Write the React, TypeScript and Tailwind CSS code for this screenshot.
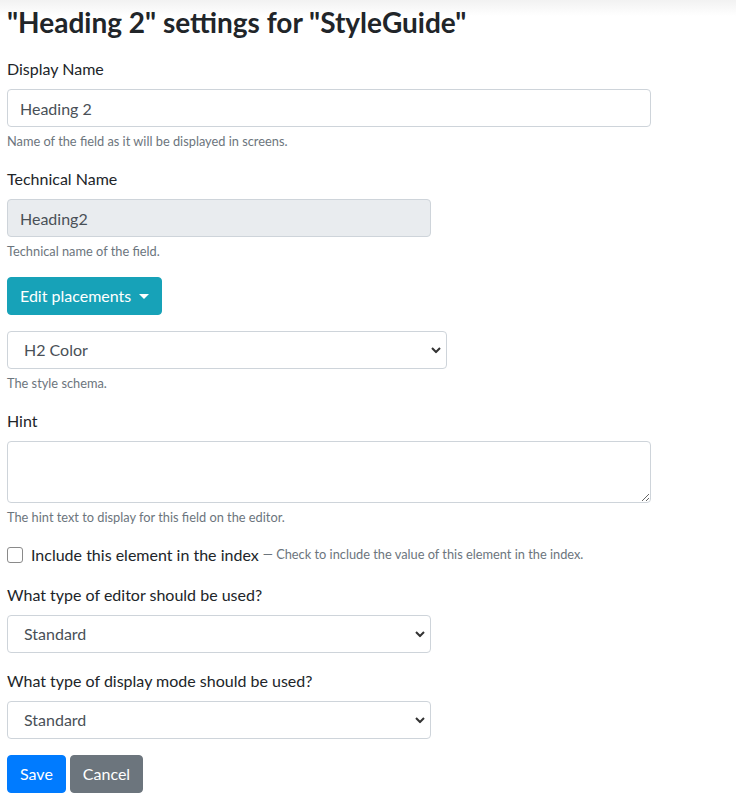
import { ReactNode } from "react";

const font = { fontFamily: 'Lato, "Open Sans", sans-serif' };

function Chevron() {
  return (
    <svg
      className="pointer-events-none absolute right-[6px] top-1/2 -translate-y-1/2"
      width="10"
      height="7"
      viewBox="0 0 10 7"
      fill="none"
    >
      <path d="M1 1.5l4 4 4-4" stroke="#333" strokeWidth="2" />
    </svg>
  );
}

function Help({ children }: { children: ReactNode }) {
  return <p className="mt-1 text-[12.8px] leading-5 text-[#6c757d]">{children}</p>;
}

function Field({ label, help, children }: { label: string; help?: string; children: ReactNode }) {
  return (
    <div className="mb-4">
      <label className="mb-2 block leading-6">{label}</label>
      {children}
      {help && <Help>{help}</Help>}
    </div>
  );
}

function Select({ value, width }: { value: string; width: string }) {
  return (
    <div className={`relative ${width}`}>
      <select
        className="h-[38px] w-full appearance-none rounded border border-[#ced4da] bg-white pl-4 pr-8 text-[#495057] outline-none"
        style={font}
        defaultValue={value}
      >
        <option>{value}</option>
      </select>
      <Chevron />
    </div>
  );
}

export default function App() {
  return (
    <div
      className="min-h-[805px] bg-[linear-gradient(to_bottom,#f2f2f2,#ffffff_16px)] px-[7px] pt-[5px] text-base text-[#212529]"
      style={font}
    >
      <h2 className="mb-[18px] text-[28px] leading-[34px] font-bold">
        "Heading 2" settings for "StyleGuide"
      </h2>

      <Field label="Display Name" help="Name of the field as it will be displayed in screens.">
        <input
          className="block h-[38px] w-[644px] rounded border border-[#ced4da] bg-white px-3 text-[#495057] outline-none"
          style={font}
          defaultValue="Heading 2"
        />
      </Field>

      <Field label="Technical Name" help="Technical name of the field.">
        <input
          className="block h-[38px] w-[424px] rounded border border-[#ced4da] bg-[#e9ecef] px-3 text-[#495057] outline-none"
          style={font}
          defaultValue="Heading2"
          disabled
        />
      </Field>

      <div className="mb-4">
        <button className="flex h-[38px] items-center rounded border border-[#17a2b8] bg-[#17a2b8] px-3 text-white">
          Edit placements
          <span className="ml-[8px] h-0 w-0 border-x-[5px] border-t-[5px] border-x-transparent border-t-white" />
        </button>
      </div>

      <div className="mb-4">
        <Select value="H2 Color" width="w-[440px]" />
        <Help>The style schema.</Help>
      </div>

      <Field label="Hint" help="The hint text to display for this field on the editor.">
        <textarea
          className="block h-[62px] w-[644px] rounded border border-[#ced4da] bg-white px-3 py-1.5 text-[#495057] outline-none"
          style={font}
        />
      </Field>

      <div className="mb-4 flex h-6 items-center">
        <input
          type="checkbox"
          className="mr-2 h-4 w-4 appearance-none rounded-[3px] border border-[#8a8a8a] bg-white"
        />
        <span>Include this element in the index</span>
        <span className="ml-1 text-[12.8px] text-[#6c757d]">— Check to include the value of this element in the index.</span>
      </div>

      <Field label="What type of editor should be used?">
        <Select value="Standard" width="w-[424px]" />
      </Field>

      <Field label="What type of display mode should be used?">
        <Select value="Standard" width="w-[424px]" />
      </Field>

      <div className="flex gap-1">
        <button className="h-[38px] rounded border border-[#007bff] bg-[#007bff] px-3 text-white">Save</button>
        <button className="h-[38px] rounded border border-[#6c757d] bg-[#6c757d] px-3 text-white">Cancel</button>
      </div>
    </div>
  );
}
